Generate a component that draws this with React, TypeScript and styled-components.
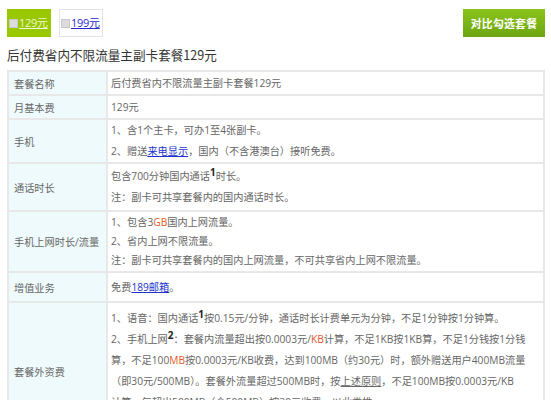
import React from "react";
import styled, { createGlobalStyle } from "styled-components";

const GlobalStyle = createGlobalStyle`
  html, body { margin: 0; padding: 0; background: #fff; }
  body { font-family: "Noto Sans CJK SC", "Liberation Sans", sans-serif; color: #666; }
`;

const Page = styled.div`
  padding: 9px 5px 0 7px;
  width: 538px;
`;

const TopBar = styled.div`
  display: flex;
  justify-content: space-between;
  align-items: center;
`;

const Tabs = styled.div`
  display: flex;
  gap: 8px;
`;

const Tab = styled.div<{ $active?: boolean }>`
  box-sizing: border-box;
  width: 44px;
  height: 28px;
  display: flex;
  align-items: center;
  gap: 1px;
  padding-left: 1px;
  white-space: nowrap;
  overflow: hidden;
  background: ${(p) => (p.$active ? "#99c700" : "#fff")};
  border: 1px solid ${(p) => (p.$active ? "#99c700" : "#e3e3e3")};
`;

const Check = styled.span`
  width: 7px;
  height: 7px;
  background: #dcdcdc;
  border: 1px solid #c8c8c8;
  flex: none;
`;

const TabLink = styled.a<{ $active?: boolean }>`
  font-family: "Open Sans", "Noto Sans CJK SC", sans-serif;
  font-size: 11px;
  line-height: 14px;
  letter-spacing: -0.3px;
  color: ${(p) => (p.$active ? "#eef6d0" : "#2a2ad0")};
  text-decoration: underline;
  white-space: nowrap;
`;

const CompareButton = styled.button`
  width: 82px;
  height: 28px;
  border: none;
  background: linear-gradient(#8cc41c, #6ba50f);
  color: #fff;
  font-weight: bold;
  font-size: 10.8px;
  font-family: "Noto Sans CJK SC", sans-serif;
  padding: 0;
  letter-spacing: 0.3px;
`;

const Title = styled.h2`
  margin: 9px 0 6px;
  font-size: 12.6px;
  line-height: 18px;
  font-weight: normal;
  color: #333;
`;

const Table = styled.table`
  width: 538px;
  border-collapse: collapse;
  font-family: "Open Sans", "Noto Sans CJK SC", sans-serif;
  font-size: 10.2px;
  color: #666;
`;

const LabelCell = styled.td`
  width: 92px;
  background: #effafc;
  border: 2px solid #e8e8e8;
  padding: 0 0 0 5px;
  vertical-align: middle;
  white-space: nowrap;
`;

const ValueCell = styled.td<{ $lh?: number; $pad?: number }>`
  border: 2px solid #e8e8e8;
  padding: ${(p) => p.$pad ?? 2}px 10px ${(p) => p.$pad ?? 2}px 3px;
  line-height: ${(p) => p.$lh ?? 21}px;
  vertical-align: middle;
  white-space: nowrap;
`;

const Line = styled.p`
  margin: 0;
`;

const Link = styled.a`
  color: #2233cc;
  text-decoration: underline;
`;

const Plain = styled.span`
  text-decoration: underline;
`;

const Red = styled.span`
  color: #e8582a;
`;

const Sup = styled.sup`
  font-weight: bold;
  color: #222;
  font-size: 10px;
  line-height: 0;
  vertical-align: 4px;
`;

type Row = { label: string; lh?: number; pad?: number; content: React.ReactNode };

const rows: Row[] = [
  { label: "套餐名称", lh: 20, pad: 1, content: <Line>后付费省内不限流量主副卡套餐129元</Line> },
  { label: "月基本费", lh: 20, pad: 1, content: <Line>129元</Line> },
  {
    label: "手机",
    lh: 21,
    pad: 0,
    content: (
      <>
        <Line>1、含1个主卡，可办1至4张副卡。</Line>
        <Line>
          2、赠送<Link>来电显示</Link>，国内（不含港澳台）接听免费。
        </Line>
      </>
    ),
  },
  {
    label: "通话时长",
    lh: 21,
    pad: 2,
    content: (
      <>
        <Line>
          包含700分钟国内通话<Sup>1</Sup>时长。
        </Line>
        <Line>注：副卡可共享套餐内的国内通话时长。</Line>
      </>
    ),
  },
  {
    label: "手机上网时长/流量",
    lh: 19,
    pad: 1,
    content: (
      <>
        <Line>
          1、包含3<Red>GB</Red>国内上网流量。
        </Line>
        <Line>2、省内上网不限流量。</Line>
        <Line>注：副卡可共享套餐内的国内上网流量，不可共享省内上网不限流量。</Line>
      </>
    ),
  },
  {
    label: "增值业务",
    lh: 20,
    pad: 4,
    content: (
      <Line>
        免费<Link>189邮箱</Link>。
      </Line>
    ),
  },
  {
    label: "套餐外资费",
    lh: 21,
    pad: 5,
    content: (
      <>
        <Line>
          1、语音：国内通话<Sup>1</Sup>按0.15元/分钟，通话时长计费单元为分钟，不足1分钟按1分钟算。
        </Line>
        <Line>
          2、手机上网<Sup>2</Sup>：套餐内流量超出按0.0003元/<Red>KB</Red>计算，不足1KB按1KB算，不足1分钱按1分钱
          <br />
          算，不足100<Red>MB</Red>按0.0003元/KB收费，达到100MB（约30元）时，额外赠送用户400MB流量
          <br />
          （即30元/500MB）。套餐外流量超过500MB时，按<Plain>上述原则</Plain>，不足100MB按0.0003元/KB
          <br />
          计算，每超出500MB（含500MB）按30元收费，以此类推。
        </Line>
        <Line>3、短信：国内点对点短信0.1元/条，国内彩信0.3元/条。</Line>
      </>
    ),
  },
];

export default function App() {
  return (
    <>
      <GlobalStyle />
      <Page>
        <TopBar>
          <Tabs>
            <Tab $active>
              <Check />
              <TabLink $active>129元</TabLink>
            </Tab>
            <Tab>
              <Check />
              <TabLink>199元</TabLink>
            </Tab>
          </Tabs>
          <CompareButton>对比勾选套餐</CompareButton>
        </TopBar>
        <Title>后付费省内不限流量主副卡套餐129元</Title>
        <Table>
          <tbody>
            {rows.map((r) => (
              <tr key={r.label}>
                <LabelCell>{r.label}</LabelCell>
                <ValueCell $lh={r.lh} $pad={r.pad}>
                  {r.content}
                </ValueCell>
              </tr>
            ))}
          </tbody>
        </Table>
      </Page>
    </>
  );
}
